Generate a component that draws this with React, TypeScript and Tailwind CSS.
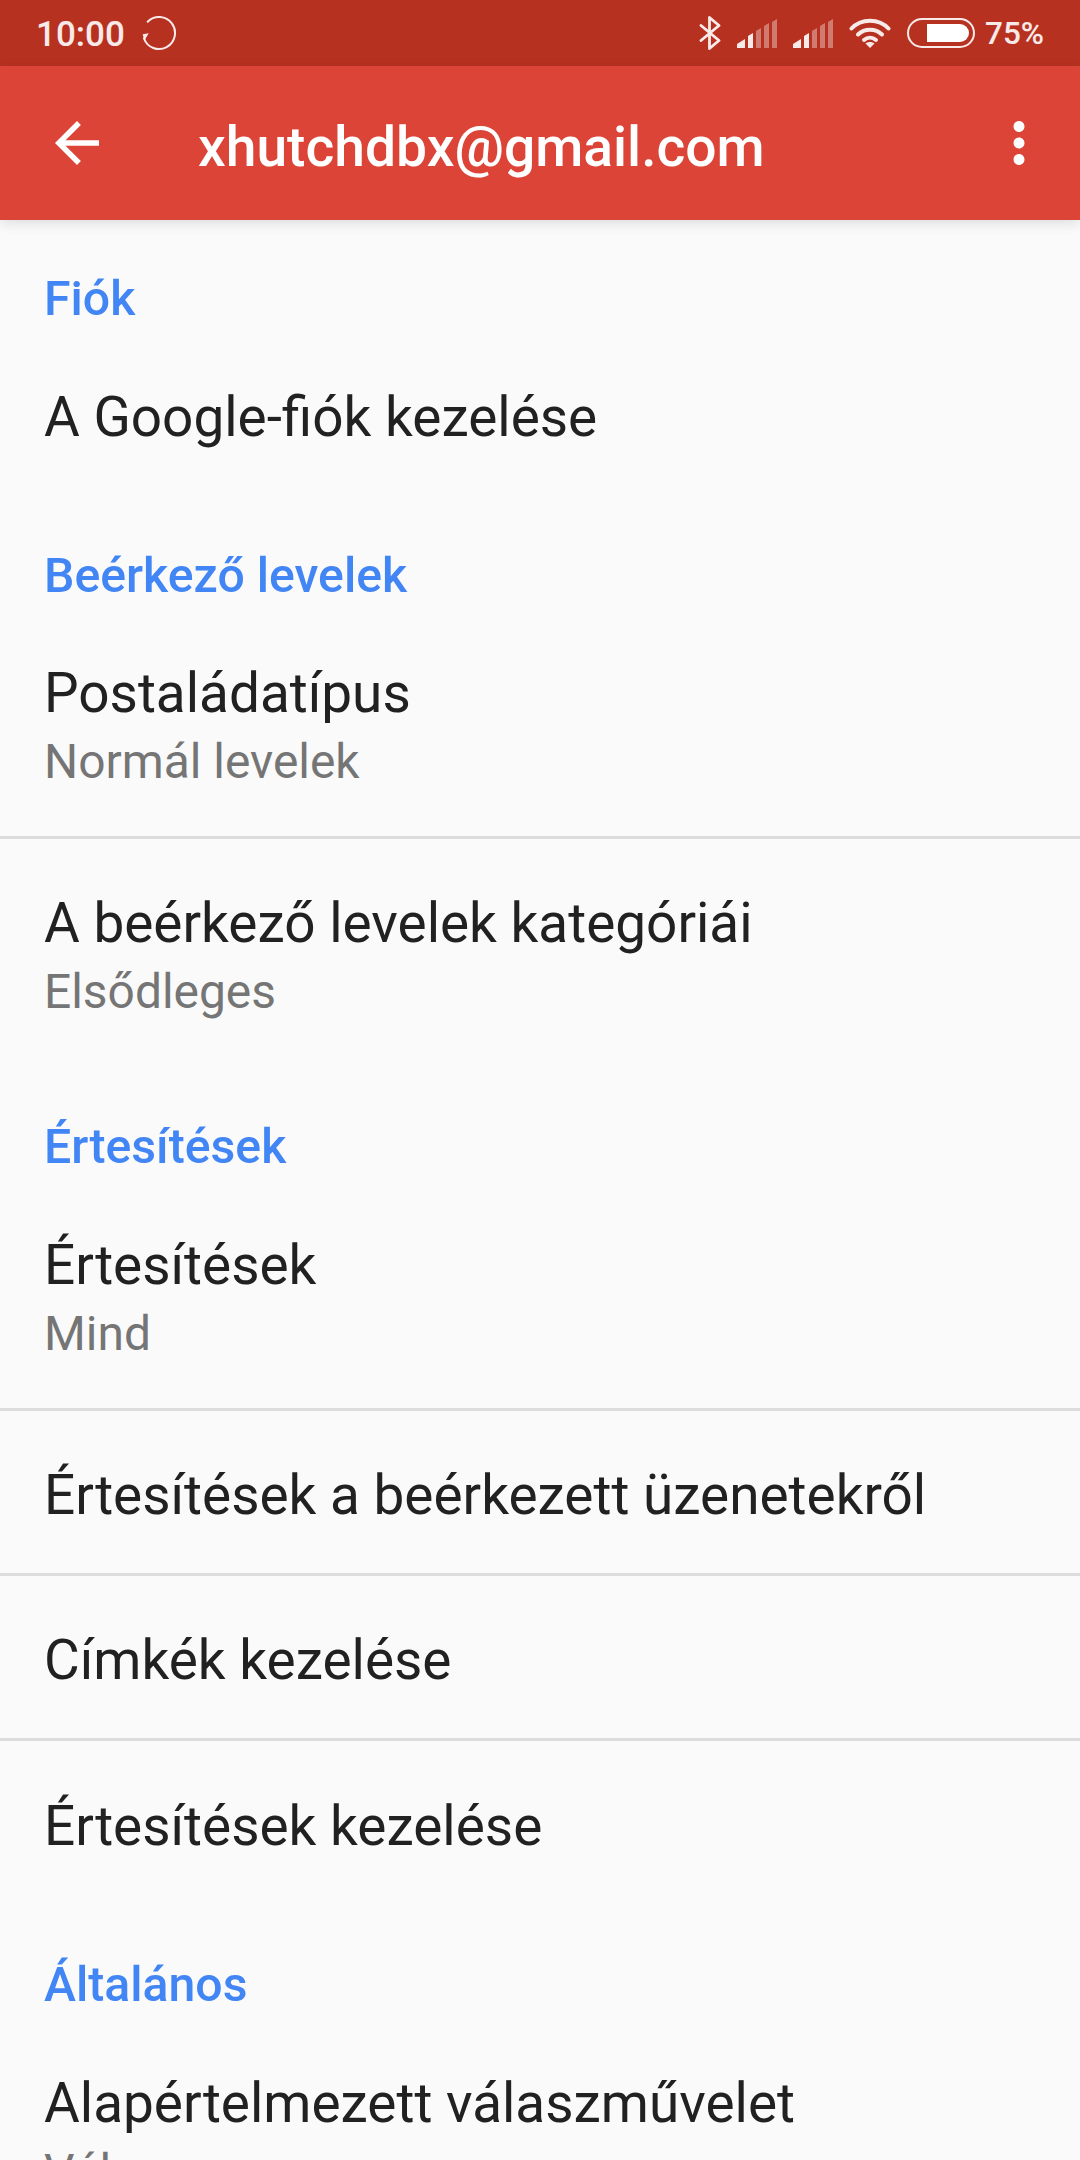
import React from 'react';

function SyncIcon() {
  return (
    <svg width="36" height="36" viewBox="0 0 36 36" fill="none" className="text-white/90">
      <path d="M6.700 6.700A16 16 0 1 1 3 23.500" stroke="currentColor" strokeWidth="2" strokeLinecap="round" />
      <path d="M1.700 19.300l6-1-4.400 7.400z" fill="currentColor" />
    </svg>
  );
}

function BluetoothIcon() {
  return (
    <svg width="22" height="34" viewBox="0 0 22 34" fill="none" stroke="currentColor" strokeWidth="2.8" strokeLinecap="round" strokeLinejoin="round">
      <path d="M2 9.500l18 15L10.500 32.500V1.500L20 9.500 2 24.500" />
    </svg>
  );
}

function SignalIcon() {
  return (
    <svg width="40" height="29" viewBox="0 0 40 29" fill="currentColor">
      <path d="M0 29v-4l8-5v9z" />
      <path d="M11 29V17l5-3v15z" />
      <path d="M19 29V12l5-3v20z" opacity="0.4" />
      <path d="M27 29V7l5-3v25z" opacity="0.4" />
      <path d="M35 29V3l5-3v29z" opacity="0.4" />
    </svg>
  );
}

function WifiIcon() {
  return (
    <svg width="42" height="30" viewBox="0 0 42 30" fill="none" stroke="currentColor" strokeWidth="4" strokeLinecap="round">
      <path d="M2.500 10.500C12 0 30 0 39.500 10.500" />
      <path d="M9 16.500c6.500-6.500 17.500-6.500 24 0" />
      <path d="M15 22c3.500-3 8.500-3 12 0" />
      <path d="M21 30l-4.500-4.500c2.500-2 6.500-2 9 0z" fill="currentColor" stroke="none" />
    </svg>
  );
}

function BatteryIcon() {
  return (
    <div className="flex h-[30px] w-[68px] items-center justify-end rounded-full border-[2.5px] border-white/90 pr-[4px]">
      <div className="h-[18px] w-[42px] rounded-l-[2px] rounded-r-full bg-white" />
    </div>
  );
}

function SectionHeader({ title, className }: { title: string; className: string }) {
  return (
    <div className={`flex items-start px-[44px] text-[48.2px] leading-[56px] font-medium text-[#4285f4] ${className}`}>
      {title}
    </div>
  );
}

function Row({ title, subtitle, divider, className }: { title: string; subtitle?: string; divider?: boolean; className: string }) {
  return (
    <div className={`flex flex-col justify-center px-[44px] ${className} ${divider ? 'border-b-[3px] border-[#dcdcdc]' : ''}`}>
      <div className="text-[54.9px] leading-[62px] text-[#212121]">{title}</div>
      {subtitle && <div className="mt-[7px] text-[47.9px] leading-[62px] text-[#757575]">{subtitle}</div>}
    </div>
  );
}

export default function App() {
  return (
    <div className="h-[2160px] w-[1080px] overflow-hidden bg-[#fafafa] font-['Roboto',sans-serif]">
      <div className="flex h-[66px] items-center justify-between bg-[#b73120] px-[36px] text-white/90">
        <div className="flex items-center gap-[16px]">
          <span className="mt-[2px] text-[35px] leading-none font-medium">10:00</span>
          <SyncIcon />
        </div>
        <div className="flex items-center">
          <BluetoothIcon />
          <div className="ml-[16px]"><SignalIcon /></div>
          <div className="ml-[16px]"><SignalIcon /></div>
          <div className="ml-[16px]"><WifiIcon /></div>
          <div className="ml-[16px]"><BatteryIcon /></div>
          <span className="mt-[1px] ml-[10px] text-[31.500px] leading-none font-medium">75%</span>
        </div>
      </div>

      <div className="relative z-10 flex h-[154px] items-center bg-[#db4437] pr-[28px] pl-[44px] text-white shadow-[0_3px_12px_rgba(0,0,0,0.12)]">
        <svg width="66" height="66" viewBox="0 0 24 24" fill="currentColor">
          <path d="M20 11H7.830l5.590-5.590L12 4l-8 8 8 8 1.410-1.410L7.830 13H20v-2z" />
        </svg>
        <div className="mt-[9px] ml-[88px] flex-1 text-[55.2px] leading-none font-medium">xhutchdbx@gmail.com</div>
        <svg width="66" height="66" viewBox="0 0 24 24" fill="currentColor">
          <path d="M12 8c1.100 0 2-.9 2-2s-.9-2-2-2-2 .9-2 2 .9 2 2 2zm0 2c-1.100 0-2 .9-2 2s.9 2 2 2 2-.9 2-2-.9-2-2-2zm0 6c-1.100 0-2 .9-2 2s.9 2 2 2 2-.9 2-2-.9-2-2-2z" />
        </svg>
      </div>

      <SectionHeader title="Fiók" className="h-[113px] pt-[51px]" />
      <Row title="A Google-fiók kezelése" className="h-[165px] pt-[3px]" />
      <SectionHeader title="Beérkező levelek" className="h-[121px] pt-[50px]" />
      <Row title="Postaládatípus" subtitle="Normál levelek" divider className="h-[220px]" />
      <Row title="A beérkező levelek kategóriái" subtitle="Elsődleges" className="h-[236px]" />
      <SectionHeader title="Értesítések" className="h-[116px] pt-[44px]" />
      <Row title="Értesítések" subtitle="Mind" divider className="h-[220px]" />
      <Row title="Értesítések a beérkezett üzenetekről" divider className="h-[165px] pt-[6px]" />
      <Row title="Címkék kezelése" divider className="h-[165px] pt-[6px]" />
      <Row title="Értesítések kezelése" className="h-[165px] pt-[4px]" />
      <SectionHeader title="Általános" className="h-[123px] pt-[51px]" />
      <Row title="Alapértelmezett válaszművelet" subtitle="Válasz" className="h-[217px]" />
    </div>
  );
}
